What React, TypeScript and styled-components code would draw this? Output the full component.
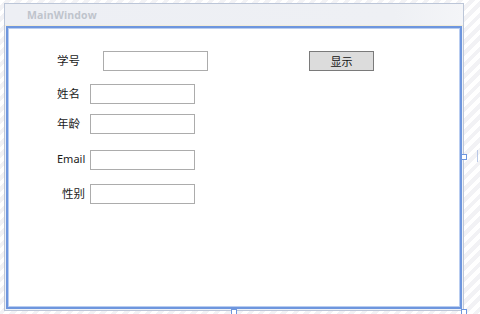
import React from "react";
import styled, { createGlobalStyle } from "styled-components";

const Global = createGlobalStyle`
  html, body { margin: 0; padding: 0; }
  body {
    width: 480px;
    height: 314px;
    overflow: hidden;
    background: repeating-linear-gradient(135deg, #ffffff 0 4px, #f2f2f5 4px 8px);
    font-family: "Noto Sans CJK SC", "Noto Sans", sans-serif;
  }
`;

const Stage = styled.div`
  position: relative;
  width: 480px;
  height: 314px;
  padding: 3px 0 0 4px;
  box-sizing: border-box;
`;

const Window = styled.div`
  width: 460px;
  height: 308px;
  box-sizing: border-box;
  border: 1px solid #bcc6d8;
  background: #eef1f6;
  display: flex;
  flex-direction: column;
`;

const TitleBar = styled.div`
  height: 21px;
  flex: none;
  display: flex;
  align-items: center;
  padding-left: 22px;
  background: linear-gradient(to right, #edeff4 0%, #eef0f4 85%, #f4f5f8 100%);
  border-bottom: 1px solid #f1ecd9;
`;

const Title = styled.span`
  font-family: "Open Sans", "Noto Sans", sans-serif;
  font-weight: 700;
  font-size: 10.5px;
  color: #bfc4cc;
  letter-spacing: 0.1px;
`;

const Client = styled.div`
  flex: 1;
  margin: 0 0 1px 1px;
  width: 456px;
  box-sizing: border-box;
  border: 2px solid #6e96de;
  box-shadow: inset 0 0 0 1px #b9cdf0;
  background: #ffffff;
  padding-top: 23px;
  display: flex;
  flex-direction: column;
`;

const Row = styled.div<{ $top: number; $left: number }>`
  display: flex;
  align-items: center;
  height: 20px;
  margin-top: ${(p) => p.$top}px;
  padding-left: ${(p) => p.$left}px;
`;

const Label = styled.span<{ $w: number; $latin?: boolean }>`
  width: ${(p) => p.$w}px;
  flex: none;
  font-family: ${(p) =>
    p.$latin ? `"Noto Sans", "Open Sans", sans-serif` : `"Noto Sans CJK SC", sans-serif`};
  font-size: ${(p) => (p.$latin ? 11 : 11.5)}px;
  color: #1a1a1a;
  line-height: 18px;
  margin-bottom: 2px;
`;

const Input = styled.div`
  width: 105px;
  height: 20px;
  box-sizing: border-box;
  border: 1px solid #acacac;
  background: #ffffff;
  flex: none;
`;

const Button = styled.div`
  margin-left: 101px;
  width: 65px;
  height: 20px;
  box-sizing: border-box;
  border: 1px solid #7a7a7a;
  background: #dcdcdc;
  display: flex;
  align-items: center;
  justify-content: center;
  font-size: 11px;
  color: #111;
`;

const Handle = styled.div<{ $x: number; $y: number }>`
  position: absolute;
  left: ${(p) => p.$x}px;
  top: ${(p) => p.$y}px;
  width: 4px;
  height: 4px;
  border: 1px solid #6e96de;
  background: #ffffff;
`;

const SideMark = styled.div`
  position: absolute;
  left: 477px;
  top: 150px;
  width: 1px;
  height: 12px;
  background: #b9c8e6;
`;

export default function App() {
  return (
    <>
      <Global />
      <Stage>
        <Window>
          <TitleBar>
            <Title>MainWindow</Title>
          </TitleBar>
          <Client>
            <Row $top={0} $left={49}>
              <Label $w={46}>学号</Label>
              <Input />
              <Button>显示</Button>
            </Row>
            <Row $top={13} $left={49}>
              <Label $w={33}>姓名</Label>
              <Input />
            </Row>
            <Row $top={10} $left={49}>
              <Label $w={33}>年龄</Label>
              <Input />
            </Row>
            <Row $top={16} $left={49}>
              <Label $w={33} $latin>Email</Label>
              <Input />
            </Row>
            <Row $top={14} $left={54}>
              <Label $w={28}>性别</Label>
              <Input />
            </Row>
          </Client>
        </Window>
        <Handle $x={461} $y={154} />
        <Handle $x={231} $y={309} />
        <Handle $x={461} $y={309} />
        <SideMark />
      </Stage>
    </>
  );
}
